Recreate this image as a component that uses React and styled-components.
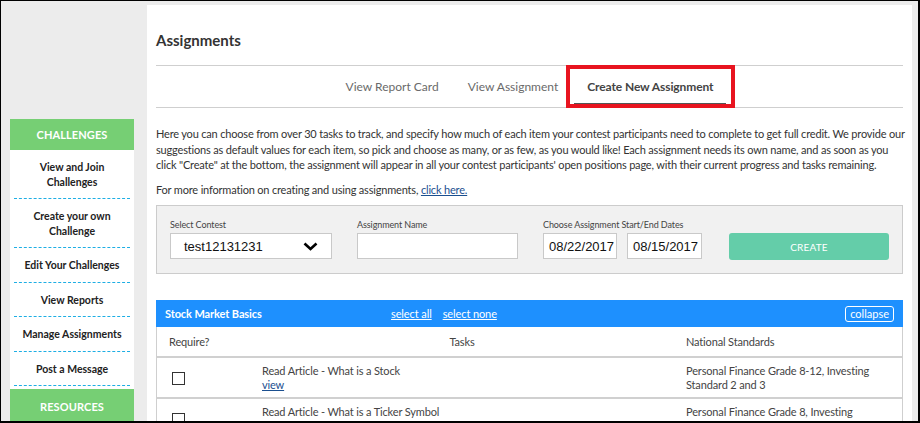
import React from "react";
import styled, { createGlobalStyle, css } from "styled-components";

const GlobalStyle = createGlobalStyle`
  html, body {
    margin: 0;
    padding: 0;
    background: #ffffff;
    font-family: Lato, "Open Sans", sans-serif;
  }
  * { box-sizing: border-box; }
`;

const Frame = styled.div`
  width: 920px;
  height: 423px;
  overflow: hidden;
  display: flex;
  align-items: flex-start;
  gap: 13px;
  padding-left: 9px;
  background: #ececec;
  border-style: solid;
  border-color: #000;
  border-width: 1px 2px 2px 1px;
`;

const Sidebar = styled.aside`
  width: 124px;
  flex: none;
  margin-top: 118px;
  background: #fff;
`;

const SideHeader = styled.div`
  height: ${(p) => (p.$tall ? 31 : 34)}px;
  background: #76cf74;
  color: #fff;
  font-weight: 700;
  font-size: 11px;
  display: flex;
  align-items: center;
  justify-content: center;
  letter-spacing: 0.1px;
`;

const Menu = styled.nav`
  padding: 0 4px 3px;
  display: flex;
  flex-direction: column;
`;

const MenuItem = styled.a`
  display: block;
  padding: 10px 8px 9px;
  border-bottom: 1px dashed #1eaee4;
  text-align: center;
  font-size: 10.5px;
  font-weight: 700;
  line-height: 14.5px;
  color: #222;
  text-decoration: none;
`;

const Main = styled.main`
  width: 765px;
  flex: none;
  margin-top: 4px;
  height: 420px;
  background: #fff;
  padding: 0 9px;
`;

const Title = styled.h1`
  margin: 0;
  height: 60px;
  padding-top: 24px;
  font-size: 15px;
  line-height: 22px;
  font-weight: 700;
  color: #333;
`;

const TabBar = styled.div`
  height: 43px;
  border-top: 1px solid #cfcfcf;
  border-bottom: 1px solid #cfcfcf;
  display: flex;
  justify-content: center;
  gap: 3px;
`;

const Tab = styled.div`
  position: relative;
  padding: 13px 13px 0;
  font-size: 12px;
  line-height: 16px;
  color: #6a6a6a;
  ${(p) =>
    p.$active &&
    css`
      color: #444;
      font-weight: 700;
      letter-spacing: -0.1px;
      border-bottom: 4px solid #555;
      &::after {
        content: "";
        position: absolute;
        left: -8px;
        right: -9px;
        top: -1px;
        bottom: -5px;
        border: 4px solid #e8141f;
      }
    `}
`;

const Para = styled.p`
  margin: ${(p) => (p.$first ? "18px" : "9px")} -4px 0 0;
  font-size: 11px;
  letter-spacing: -0.18px;
  line-height: 15.5px;
  color: #333;
`;

const TextLink = styled.a`
  color: #1b4f8f;
  text-decoration: underline;
`;

const FormPanel = styled.div`
  margin-top: 8px;
  height: 69px;
  border: 1px solid #cccccc;
  background: #f1f1f1;
  padding: 13px 13px 0;
  display: flex;
  align-items: flex-start;
`;

const Field = styled.div`
  display: flex;
  flex-direction: column;
  gap: 2px;
  margin-right: ${(p) => p.$gap || 0}px;
`;

const Label = styled.label`
  font-size: 9px;
  line-height: 12px;
  letter-spacing: -0.1px;
  color: #444;
`;

const Row = styled.div`
  display: flex;
  gap: 10px;
`;

const Box = styled.div`
  width: ${(p) => p.$w}px;
  height: 26px;
  background: #fff;
  border: 1px solid #c9c9c9;
  display: flex;
  align-items: center;
  justify-content: space-between;
  padding: 0 ${(p) => p.$pad || 5}px;
  font-family: "Liberation Sans", Arial, sans-serif;
  font-size: 13px;
  color: #111;
`;

const CreateButton = styled.button`
  margin-top: 14px;
  width: 160px;
  height: 27px;
  border: none;
  border-radius: 3px;
  background: #64cda9;
  color: #fff;
  font-family: Lato, sans-serif;
  font-size: 10px;
  letter-spacing: 0.2px;
`;

const Table = styled.div`
  margin-top: 26px;
  border-left: 1px solid #cfcfcf;
  border-right: 1px solid #cfcfcf;
`;

const TableHead = styled.div`
  height: 27px;
  margin: 0 -1px;
  background: #1e90fe;
  color: #fff;
  font-size: 11px;
  letter-spacing: -0.1px;
  display: flex;
  align-items: center;
  padding: 0 9px;
`;

const GroupName = styled.span`
  font-weight: 700;
  width: 226px;
`;

const HeadLink = styled.a`
  color: #fff;
  text-decoration: underline;
  margin-right: 11px;
`;

const Collapse = styled.button`
  margin-left: auto;
  height: 16px;
  padding: 0 4px;
  border: 1px solid #fff;
  border-radius: 3px;
  background: transparent;
  color: #fff;
  font-family: Lato, sans-serif;
  font-size: 11px;
  line-height: 13px;
`;

const Grid = styled.div`
  display: grid;
  grid-template-columns: 93px 424px 1fr;
  border-bottom: 2px solid #d0d0d0;
  font-size: 11px;
  letter-spacing: -0.15px;
  line-height: 14px;
  color: #444;
`;

const Cell = styled.div`
  padding: ${(p) => (p.$head ? "8px 12px 7px" : "6px 12px 5px")};
  text-align: ${(p) => (p.$center ? "center" : "left")};
  ${(p) =>
    p.$check &&
    css`
      display: flex;
      align-items: center;
      padding-left: 15px;
    `}
`;

const Check = styled.span`
  display: block;
  width: 13px;
  height: 13px;
  border: 1px solid #333;
  background: #fff;
`;

const ViewLink = styled.a`
  display: block;
  color: #1b4f8f;
  text-decoration: underline;
`;

const Chevron = () => (
  <svg width="15" height="9" viewBox="0 0 15 9">
    <polyline points="1.5,1.5 7.5,7 13.5,1.5" fill="none" stroke="#000" strokeWidth="2.6" />
  </svg>
);

const menu = [
  "View and Join Challenges",
  "Create your own Challenge",
  "Edit Your Challenges",
  "View Reports",
  "Manage Assignments",
  "Post a Message",
];

const tasks = [
  {
    name: "Read Article - What is a Stock",
    std: "Personal Finance Grade 8-12, Investing Standard 2 and 3",
  },
  {
    name: "Read Article - What is a Ticker Symbol",
    std: "Personal Finance Grade 8, Investing Standard 2",
  },
];

export default function App() {
  return (
    <>
      <GlobalStyle />
      <Frame>
        <Sidebar>
          <SideHeader $tall>CHALLENGES</SideHeader>
          <Menu>
            {menu.map((m) => (
              <MenuItem key={m}>{m}</MenuItem>
            ))}
          </Menu>
          <SideHeader>RESOURCES</SideHeader>
        </Sidebar>
        <Main>
          <Title>Assignments</Title>
          <TabBar>
            <Tab>View Report Card</Tab>
            <Tab>View Assignment</Tab>
            <Tab $active>Create New Assignment</Tab>
          </TabBar>
          <Para $first>
            Here you can choose from over 30 tasks to track, and specify how much of each item your contest
            participants need to complete to get full credit. We provide our suggestions as default values for
            each item, so pick and choose as many, or as few, as you would like! Each assignment needs its own
            name, and as soon as you click "Create" at the bottom, the assignment will appear in all your contest
            participants' open positions page, with their current progress and tasks remaining.
          </Para>
          <Para>
            For more information on creating and using assignments, <TextLink>click here.</TextLink>
          </Para>
          <FormPanel>
            <Field $gap={25}>
              <Label>Select Contest</Label>
              <Box $w={162} $pad={13}>
                test12131231
                <Chevron />
              </Box>
            </Field>
            <Field $gap={25}>
              <Label>Assignment Name</Label>
              <Box $w={161} />
            </Field>
            <Field $gap={27}>
              <Label>Choose Assignment Start/End Dates</Label>
              <Row>
                <Box $w={74}>08/22/2017</Box>
                <Box $w={75}>08/15/2017</Box>
              </Row>
            </Field>
            <CreateButton>CREATE</CreateButton>
          </FormPanel>
          <Table>
            <TableHead>
              <GroupName>Stock Market Basics</GroupName>
              <HeadLink>select all</HeadLink>
              <HeadLink>select none</HeadLink>
              <Collapse>collapse</Collapse>
            </TableHead>
            <Grid>
              <Cell $head>Require?</Cell>
              <Cell $head $center>Tasks</Cell>
              <Cell $head>National Standards</Cell>
            </Grid>
            {tasks.map((t) => (
              <Grid key={t.name}>
                <Cell $check>
                  <Check />
                </Cell>
                <Cell>
                  {t.name}
                  <ViewLink>view</ViewLink>
                </Cell>
                <Cell>{t.std}</Cell>
              </Grid>
            ))}
          </Table>
        </Main>
      </Frame>
    </>
  );
}
